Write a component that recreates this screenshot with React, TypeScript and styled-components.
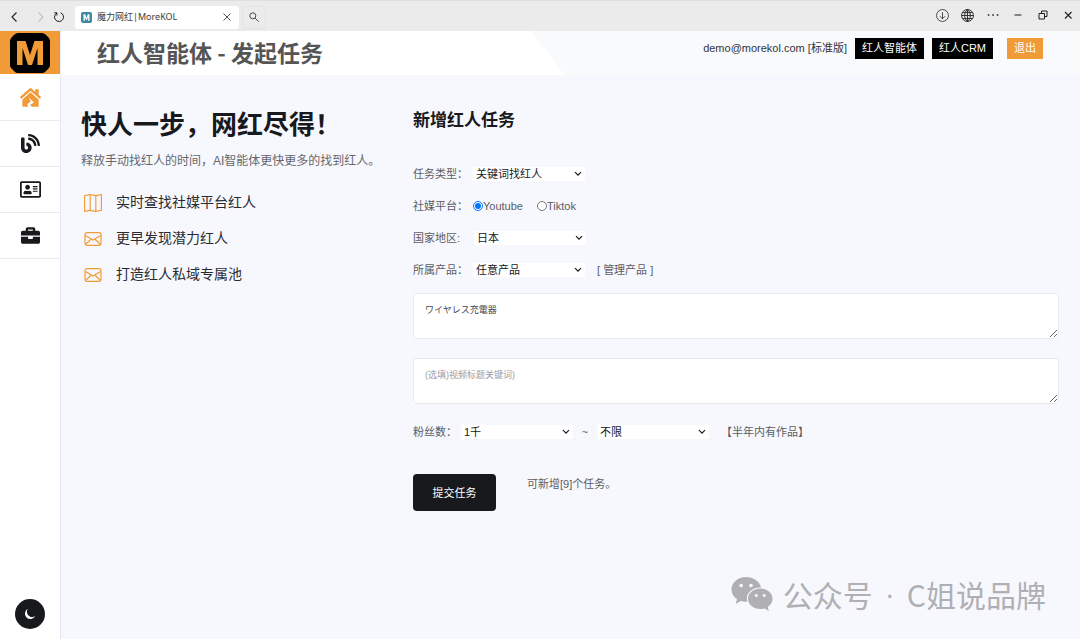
import React, { useState } from "react";
import styled, { createGlobalStyle } from "styled-components";
import { FaHouseDamage, FaBlog, FaRegAddressCard, FaBriefcase } from "react-icons/fa";
import { BsMap } from "react-icons/bs";

const latinFirst = `"Liberation Sans", "Noto Sans CJK SC", sans-serif`;
const cjkFirst = `"Noto Sans CJK SC", sans-serif`;

const GlobalStyle = createGlobalStyle`
  *, *::before, *::after { box-sizing: border-box; }
  body { margin: 0; background: #f7f8fd; font: 11px/16px ${latinFirst}; color: #5c5c62; }
  h1, h2, p, ul { margin: 0; padding: 0; }
  ul { list-style: none; }
  button, select, textarea, input { font: inherit; margin: 0; }
  button { border: 0; padding: 0; background: none; cursor: pointer; }
  a { color: inherit; text-decoration: none; }
  svg { display: block; flex: none; }
`;

const Page = styled.div`
  min-height: 100vh;
  display: flex;
  flex-direction: column;
`;

const BrowserBar = styled.header`
  height: 31px;
  display: flex;
  align-items: center;
  padding: 2px 0 0 6px;
  background: #ebebeb;
  border-top: 1px solid #dedee6;
`;

const ChromeButton = styled.button<{ $width: number; $gap?: number; $faded?: boolean }>`
  width: ${(p) => p.$width}px;
  height: 24px;
  margin-right: ${(p) => p.$gap ?? 0}px;
  display: grid;
  place-items: center;
  color: #1c1c1c;
  opacity: ${(p) => (p.$faded ? 0.2 : 1)};
`;

const Tab = styled.div`
  width: 164px;
  height: 23px;
  padding: 0 6px;
  display: flex;
  align-items: center;
  gap: 5px;
  background: #fff;
  border-radius: 3px;
  font: 9px/14px "Noto Sans", ${cjkFirst};
  color: #3c3c3c;
`;

const TabTitle = styled.span`
  flex: 1;
  white-space: nowrap;
`;

const SearchButton = styled.button`
  width: 24px;
  height: 23px;
  margin-left: 3px;
  display: grid;
  place-items: center;
  border: 1px solid #e3e3e3;
  border-radius: 3px;
  color: #4c4c4c;
`;

const WindowTools = styled.div`
  margin-left: auto;
  align-self: flex-start;
  display: flex;
`;

const Shell = styled.div`
  flex: 1;
  display: flex;
`;

const Sidebar = styled.aside`
  width: 61px;
  flex: none;
  display: flex;
  flex-direction: column;
  background: #fff;
  border-right: 1px solid #e8e9ee;
`;

const Logo = styled.a`
  height: 43px;
  margin-bottom: 1px;
  display: grid;
  place-items: center;
  background: #f19a38;
`;

const NavLink = styled.a<{ $active?: boolean }>`
  height: 46px;
  display: grid;
  place-items: center;
  border-bottom: 1px solid #e9eaee;
  color: ${(p) => (p.$active ? "#f19a38" : "#18191d")};
`;

const ThemeButton = styled.button`
  width: 30px;
  height: 30px;
  margin: auto auto 10px 15px;
  display: grid;
  place-items: center;
  border-radius: 50%;
  background: #18191d;
  color: #fff;
`;

const Main = styled.div`
  flex: 1;
  min-width: 0;
`;

const TopBar = styled.div`
  height: 44px;
  display: flex;
  justify-content: space-between;
  background: #f9fafc;
`;

const TitleBand = styled.div`
  width: 504px;
  padding: 5px 0 0 36px;
  background: #fff;
  clip-path: polygon(0 0, 470px 0, 100% 100%, 0 100%);
`;

const PageTitle = styled.h1`
  font: 700 23px/32px ${cjkFirst};
  color: #555;
`;

const Account = styled.div`
  display: flex;
  align-items: flex-start;
  padding: 7px 37px 0 0;
  line-height: 21px;
  color: #33343c;
  white-space: nowrap;
`;

const TopLink = styled.a<{ $accent?: boolean }>`
  margin-left: ${(p) => (p.$accent ? 14 : 8)}px;
  padding: 0 7px;
  background: ${(p) => (p.$accent ? "#f19a38" : "#000")};
  color: #fff;
`;

const Content = styled.main`
  display: grid;
  grid-template-columns: 332px minmax(0, 1fr);
  padding: 28px 21px 0 20px;
`;

const Headline = styled.h2`
  font: 700 26px/40px ${cjkFirst};
  color: #18191d;
`;

const Lead = styled.p`
  margin-top: 10px;
  font-size: 12px;
  color: #66666c;
`;

const Features = styled.ul`
  margin-top: 20px;
  display: grid;
  gap: 12px;
`;

const Feature = styled.li`
  display: flex;
  align-items: center;
  gap: 14px;
  padding-left: 3px;
  font: 14px/24px ${cjkFirst};
  color: #2a2b31;

  svg { color: #f19a38; margin-top: 3px; }
`;

const FormTitle = styled.h2`
  margin-bottom: 27px;
  font: 700 17px/32px ${cjkFirst};
  color: #18191d;
`;

const Row = styled.div`
  height: 24px;
  margin-bottom: 8px;
  display: flex;
  align-items: center;
  white-space: nowrap;
`;

const Label = styled.label<{ $width: number }>`
  width: ${(p) => p.$width}px;
`;

const chevron = `url("data:image/svg+xml,%3Csvg xmlns='http://www.w3.org/2000/svg' width='8' height='6' fill='none' stroke='%2318191d' stroke-width='1.2'%3E%3Cpath d='M1 1.200 4 4.200 7 1.200'/%3E%3C/svg%3E")`;

const Select = styled.select`
  appearance: none;
  width: 112px;
  height: 14px;
  padding: 0 14px 0 3px;
  border: 0;
  border-radius: 0;
  background: #fff ${chevron} no-repeat right 3px center;
  color: #18191d;
  line-height: 14px;
`;

const Radio = styled.label`
  display: flex;
  align-items: center;
  margin-right: 14px;

  input { width: 10px; height: 10px; }
`;

const TextAreas = styled.div`
  padding: 3px 0 16px;
  display: grid;
  gap: 19px;
`;

const TextArea = styled.textarea`
  display: block;
  width: 100%;
  height: 46px;
  padding: 8px 11px;
  border: 1px solid #e8e9ee;
  border-radius: 4px;
  background: #fff;
  outline: none;
  resize: vertical;
  font-size: 9px;
  line-height: 16px;
  color: #44454b;

  &::placeholder { color: #9a9da8; }
`;

const Aside = styled.span`
  margin: 0 12px;
`;

const Tilde = styled.span`
  width: 24px;
  text-align: center;
`;

const Actions = styled.div`
  margin-top: 30px;
  display: flex;
  gap: 31px;
`;

const Submit = styled.button`
  width: 83px;
  height: 37px;
  border-radius: 4px;
  background: #18191d;
  color: #fff;
`;

const Quota = styled.p`
  padding-top: 2px;
`;

const Watermark = styled.div`
  position: absolute;
  right: 34px;
  bottom: 24px;
  display: flex;
  align-items: center;
  gap: 10px;
  font: 30px/42px ${cjkFirst};
  color: #b0b0b4;
`;

const Dot = styled.span`
  width: 14px;
  font-family: ${latinFirst};
  text-align: center;
`;

const Envelope = () => (
  <svg width="18" height="18" viewBox="0 0 18 18" fill="none" stroke="currentColor" strokeWidth="1.200">
    <rect x="1" y="2.700" width="16" height="12.600" rx="2" />
    <path d="M1.500 5.500 9 10l7.500-4.500M2 14l5.200-5M16 14l-5.200-5" />
  </svg>
);

const LogoMark = () => (
  <svg width="40" height="40" viewBox="0 0 40 40">
    <path d="M8 0h24q2 0 3.500 1.500l3 3Q40 6 40 8v24q0 2-1.500 3.500l-3 3Q34 40 32 40H8q-2 0-3.500-1.500l-3-3Q0 34 0 32V8q0-2 1.500-3.500l3-3Q6 0 8 0z" fill="#000" />
    <path d="M7 32V8h8.500L20 22l4.500-14H33v24h-5.500V15L22 32h-4l-5.500-17v17z" fill="#f19a38" />
  </svg>
);

const TabMark = () => (
  <svg width="11" height="11" viewBox="0 0 11 11">
    <rect width="11" height="11" rx="2" fill="#3d89a3" />
    <path d="M2.500 8.800V2.300h1.600l1.400 3.400 1.400-3.400h1.600v6.500H7.100V5L5.900 8H5.100L3.900 5v3.800z" fill="#fff" />
  </svg>
);

const Line = ({ d, size = 12, width = 1.1 }: { d: string; size?: number; width?: number }) => (
  <svg width={size} height={size} viewBox="0 0 12 12" fill="none" stroke="currentColor" strokeWidth={width}>
    <path d={d} />
  </svg>
);

const Moon = () => (
  <svg width="12" height="12" viewBox="0 0 12 12">
    <path d="M4 .8a5.400 5.400 0 1 0 7.200 7.300A5.200 5.200 0 0 1 4 .8z" fill="currentColor" />
  </svg>
);

const WeChat = () => (
  <svg width="42" height="36" viewBox="0 0 42 36">
    <path fill="#b0b0b4" d="M15 1C7 1 .5 6.500.5 13.500c0 4 2 7.300 5.500 9.600L4.700 28l5.200-2.900c1.700.5 3.400.7 5.200.7h1.200a11 11 0 0 1-.5-3.200c0-6.300 6-11.200 13.300-11.200h1C28.600 5.300 22.500 1 15 1z" />
    <path fill="#b0b0b4" d="M41.500 22.800c0-5.700-5.500-10.300-12.200-10.300S17 17.100 17 22.800s5.500 10.300 12.300 10.300c1.500 0 3-.2 4.300-.6L37.800 35l-1.100-4c3-1.900 4.800-4.900 4.800-8.200z" />
    <g fill="#f7f8fd">
      <circle cx="10.200" cy="9.500" r="1.800" />
      <circle cx="20" cy="9.500" r="1.800" />
      <circle cx="25.300" cy="19.600" r="1.500" />
      <circle cx="33.200" cy="19.600" r="1.500" />
    </g>
  </svg>
);

export default function App() {
  const [platform, setPlatform] = useState("Youtube");

  return (
    <>
      <GlobalStyle />
      <Page>
        <BrowserBar>
          <ChromeButton $width={18} $gap={7} aria-label="后退"><Line d="M7.500 1.500 3 6l4.500 4.500" /></ChromeButton>
          <ChromeButton $width={18} $gap={1} $faded aria-label="前进"><Line d="M4.500 1.500 9 6l-4.500 4.500" /></ChromeButton>
          <ChromeButton $width={18} $gap={7} aria-label="刷新"><Line d="M7.600 1.800a4.500 4.500 0 1 1-3.600.2M3.900 4.500V1.800H1.300" width={1} /></ChromeButton>
          <Tab>
            <TabMark />
            <TabTitle>魔力网红|MoreKOL</TabTitle>
            <Line d="M2.500 2.500l7 7M9.500 2.500l-7 7" width={0.9} />
          </Tab>
          <SearchButton aria-label="搜索">
            <Line d="M4.800 1.800a3 3 0 1 0 0 6 3 3 0 0 0 0-6M7 7l3.800 3.800" width={1} />
          </SearchButton>
          <WindowTools>
            <ChromeButton $width={25} aria-label="下载">
              <Line d="M6 .5a5.500 5.500 0 1 0 0 11 5.500 5.500 0 0 0 0-11M6 3v6M3.700 6.700 6 9l2.300-2.300" size={13} width={0.7} />
            </ChromeButton>
            <ChromeButton $width={25} aria-label="网络">
              <Line d="M6 .5a5.500 5.500 0 1 0 0 11 5.500 5.500 0 0 0 0-11M6 .5C2.500 3 2.500 9 6 11.500M6 .5c3.500 2.500 3.500 8.500 0 11M6 .5v11M.5 6h11M1.500 3.300h9M1.500 8.700h9" size={13} width={0.8} />
            </ChromeButton>
            <ChromeButton $width={25} aria-label="更多">
              <Line d="M.8 6h1.500M5.300 6h1.500M9.800 6h1.500" width={1.5} />
            </ChromeButton>
            <ChromeButton $width={25} aria-label="最小化"><Line d="M2.500 6h7" width={1} /></ChromeButton>
            <ChromeButton $width={25} aria-label="还原">
              <Line d="M2 4.500h5.500V10H2zM4.500 4.500V2H10v5.500H7.500" width={1} />
            </ChromeButton>
            <ChromeButton $width={25} aria-label="关闭"><Line d="M3 3l6.500 6.500M9.500 3 3 9.500" /></ChromeButton>
          </WindowTools>
        </BrowserBar>

        <Shell>
          <Sidebar>
            <Logo href="#" aria-label="MoreKOL"><LogoMark /></Logo>
            <nav>
              <NavLink href="#home" $active aria-label="首页"><FaHouseDamage size={21} /></NavLink>
              <NavLink href="#blog" aria-label="博客"><FaBlog size={19} /></NavLink>
              <NavLink href="#contacts" aria-label="联系人"><FaRegAddressCard size={21} /></NavLink>
              <NavLink href="#work" aria-label="工作"><FaBriefcase size={19} /></NavLink>
            </nav>
            <ThemeButton aria-label="深色模式"><Moon /></ThemeButton>
          </Sidebar>

          <Main>
            <TopBar>
              <TitleBand><PageTitle>红人智能体 - 发起任务</PageTitle></TitleBand>
              <Account>
                <span>demo@morekol.com [标准版]</span>
                <TopLink href="#agent">红人智能体</TopLink>
                <TopLink href="#crm">红人CRM</TopLink>
                <TopLink href="#logout" $accent>退出</TopLink>
              </Account>
            </TopBar>

            <Content>
              <section>
                <Headline>快人一步，网红尽得！</Headline>
                <Lead>释放手动找红人的时间，AI智能体更快更多的找到红人。</Lead>
                <Features>
                  <Feature><BsMap size={18} />实时查找社媒平台红人</Feature>
                  <Feature><Envelope />更早发现潜力红人</Feature>
                  <Feature><Envelope />打造红人私域专属池</Feature>
                </Features>
              </section>

              <form onSubmit={(e) => e.preventDefault()}>
                <FormTitle>新增红人任务</FormTitle>
                <Row>
                  <Label $width={60} htmlFor="type">任务类型：</Label>
                  <Select id="type"><option>关键词找红人</option></Select>
                </Row>
                <Row role="radiogroup" aria-label="社媒平台">
                  <Label as="span" $width={60}>社媒平台：</Label>
                  {["Youtube", "Tiktok"].map((name) => (
                    <Radio key={name}>
                      <input
                        type="radio"
                        name="platform"
                        checked={platform === name}
                        onChange={() => setPlatform(name)}
                      />
                      {name}
                    </Radio>
                  ))}
                </Row>
                <Row>
                  <Label $width={61} htmlFor="country">国家地区:</Label>
                  <Select id="country"><option>日本</option></Select>
                </Row>
                <Row>
                  <Label $width={60} htmlFor="product">所属产品：</Label>
                  <Select id="product"><option>任意产品</option></Select>
                  <Aside>[ <a href="#products">管理产品</a> ]</Aside>
                </Row>
                <TextAreas>
                  <TextArea aria-label="关键词" lang="ja" defaultValue="ワイヤレス充電器" autoFocus />
                  <TextArea aria-label="视频标题关键词" placeholder="(选填)视频标题关键词)" />
                </TextAreas>
                <Row>
                  <Label $width={48} htmlFor="min">粉丝数：</Label>
                  <Select id="min"><option>1千</option></Select>
                  <Tilde>~</Tilde>
                  <Select id="max" aria-label="最多粉丝数"><option>不限</option></Select>
                  <Aside>【半年内有作品】</Aside>
                </Row>
                <Actions>
                  <Submit type="submit">提交任务</Submit>
                  <Quota>可新增[9]个任务。</Quota>
                </Actions>
              </form>
            </Content>
          </Main>
        </Shell>
        <Watermark>
          <WeChat />
          <span>公众号</span>
          <Dot>·</Dot>
          <span>C姐说品牌</span>
        </Watermark>
      </Page>
    </>
  );
}
